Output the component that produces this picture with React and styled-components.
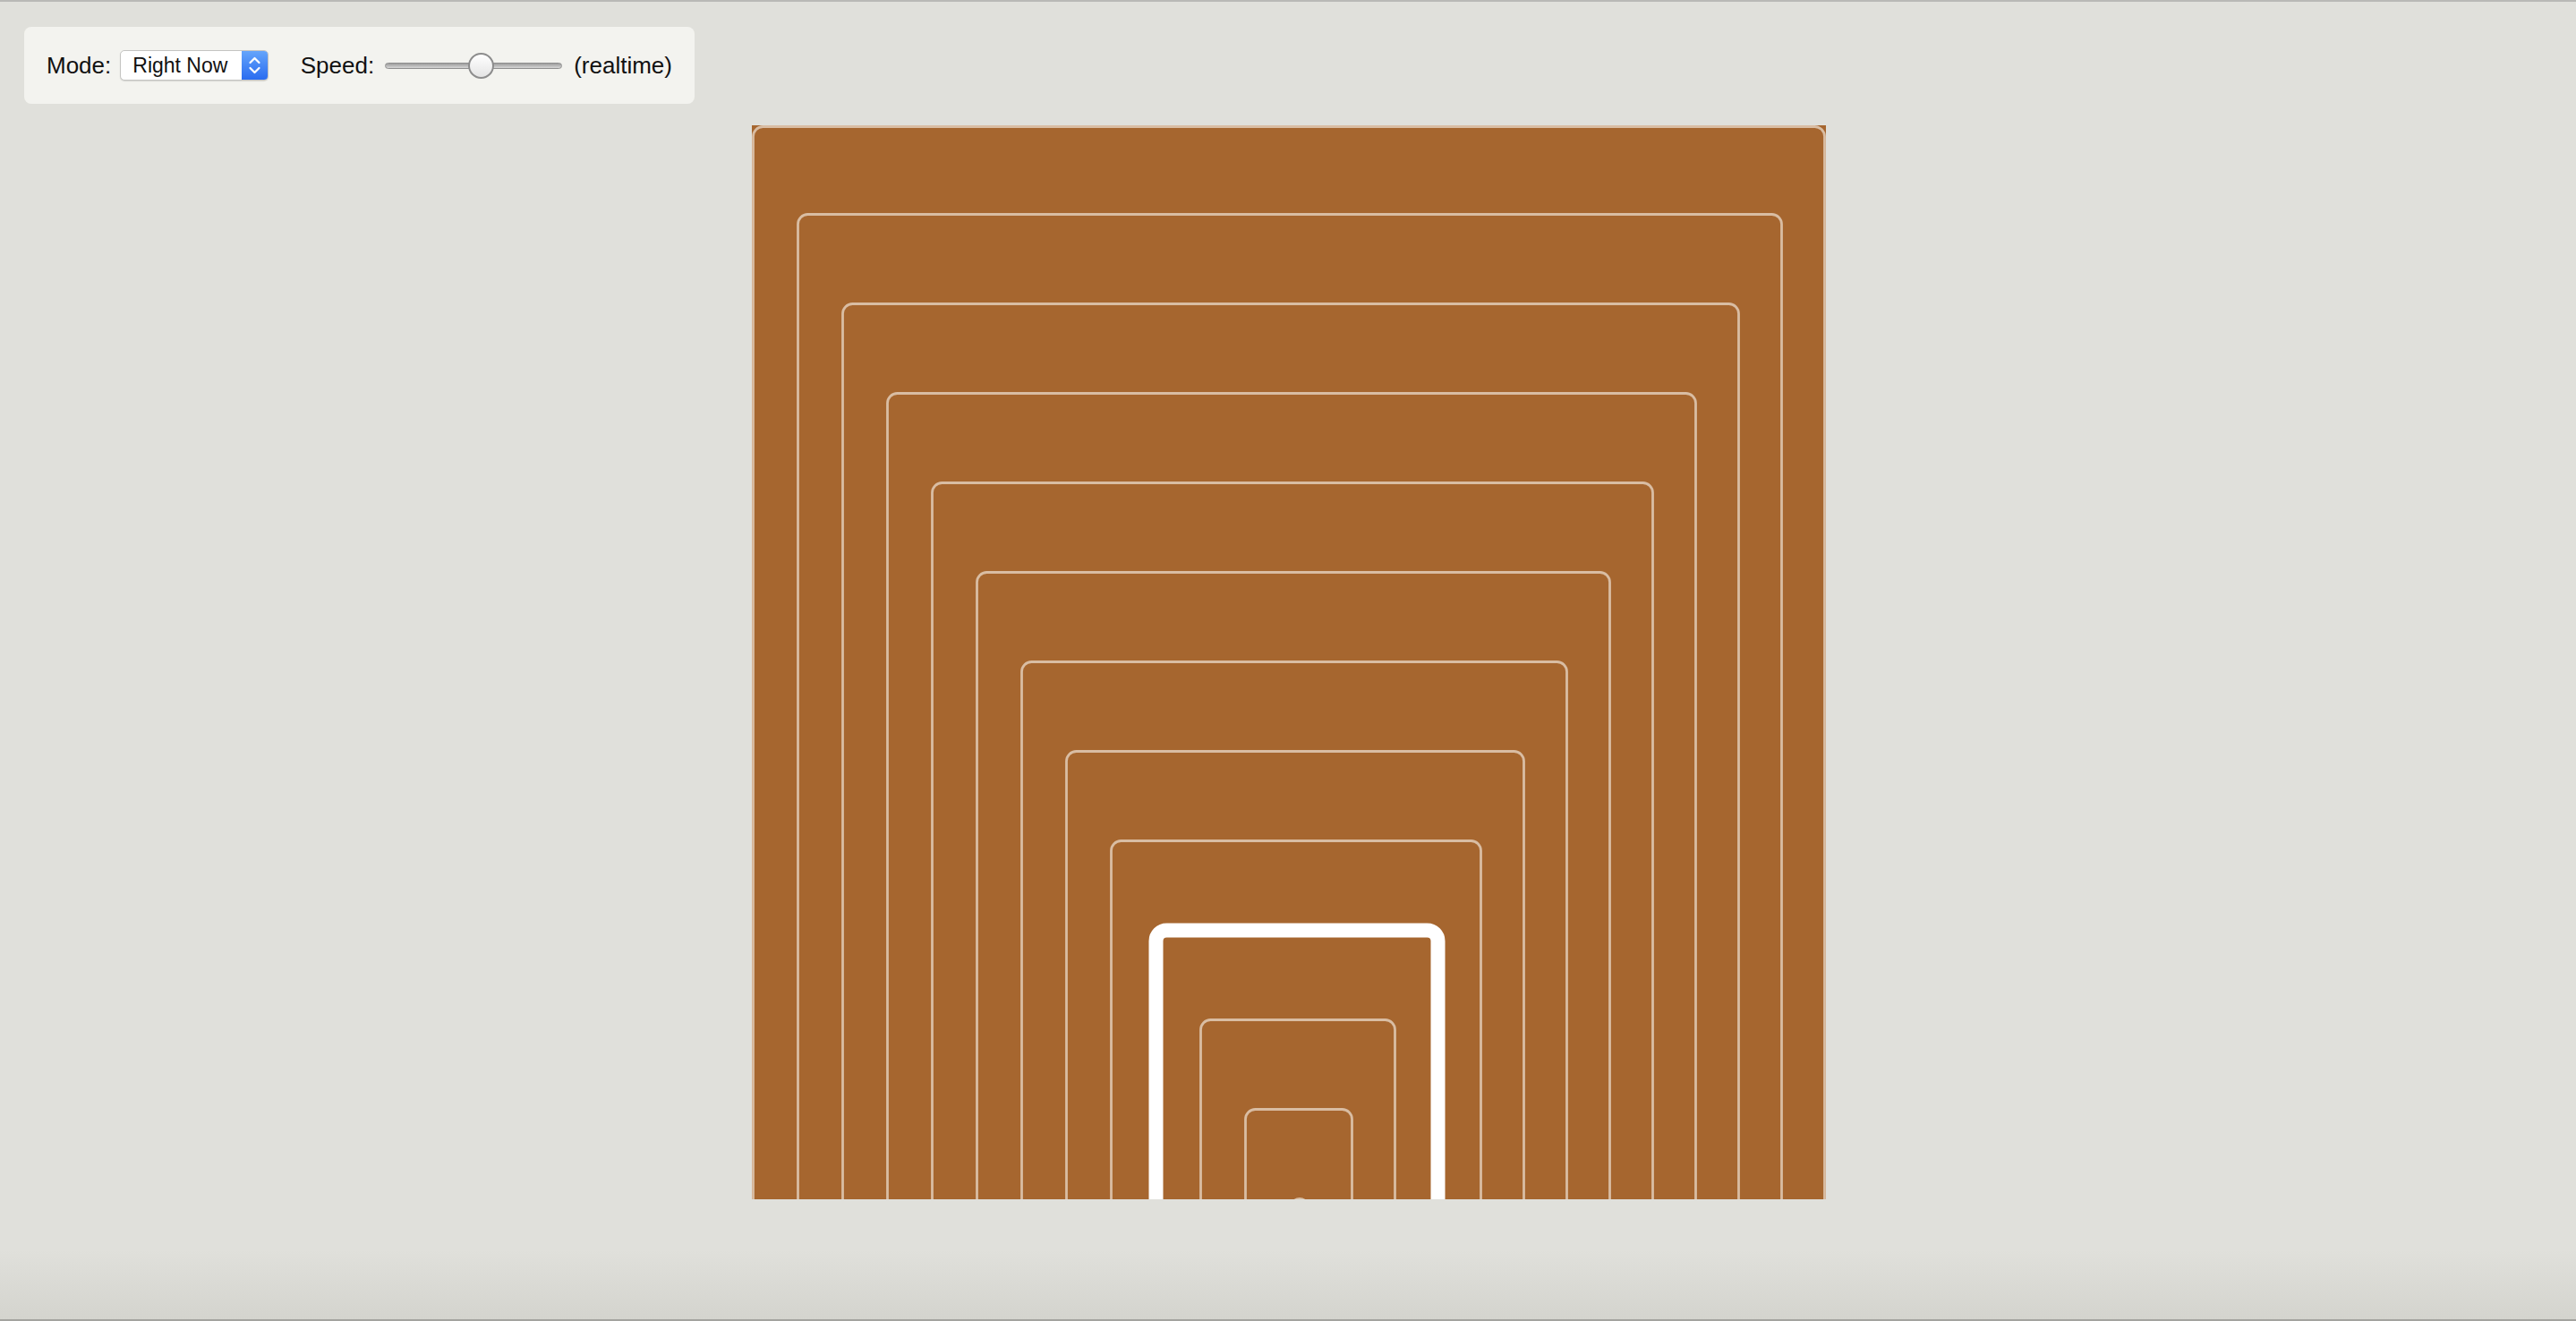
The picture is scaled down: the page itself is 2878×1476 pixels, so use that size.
import React, { useState } from "react";
import styled, { createGlobalStyle } from "styled-components";

const GlobalStyle = createGlobalStyle`
  html, body { margin: 0; padding: 0; }
  body {
    background: #e0e0db;
    font-family: "Liberation Sans", Arial, sans-serif;
  }
`;

const Page = styled.div`
  box-sizing: border-box;
  height: 100vh;
  display: flex;
  flex-direction: column;
  padding-top: 28px;
  border-top: 2px solid #b9b9b6;
  background: linear-gradient(
    to bottom,
    #e0e0db 0,
    #e0e0db calc(100% - 80px),
    #d4d4ce calc(100% - 2px),
    #a3a39f calc(100% - 2px)
  );
  overflow: hidden;
`;

const Toolbar = styled.div`
  align-self: flex-start;
  margin-left: 27px;
  box-sizing: border-box;
  width: 749px;
  height: 86px;
  padding: 0 25px;
  display: flex;
  align-items: center;
  background: #f3f3ef;
  border-radius: 8px;
  font-size: 26px;
  color: #111;
`;

const Label = styled.span`
  margin-left: ${(p) => p.$before || 0}px;
  margin-right: ${(p) => p.$after || 0}px;
  white-space: nowrap;
`;

const SelectBox = styled.div`
  box-sizing: border-box;
  width: 167px;
  height: 34px;
  display: flex;
  background: #fff;
  border: 1px solid #c4c4c2;
  border-radius: 5px;
  box-shadow: 0 1px 1px rgba(0, 0, 0, 0.12);
  overflow: hidden;
`;

const NativeSelect = styled.select`
  appearance: none;
  -webkit-appearance: none;
  flex: 1;
  min-width: 0;
  height: 100%;
  border: none;
  outline: none;
  background: transparent;
  padding: 0 0 0 13px;
  font-family: "Liberation Sans", Arial, sans-serif;
  font-size: 23px;
  color: #111;
`;

const ArrowBox = styled.div`
  width: 29px;
  height: 100%;
  flex: none;
  background: linear-gradient(to bottom, #65a5fb, #2a6cf0);
  display: flex;
  align-items: center;
  justify-content: center;
`;

const Range = styled.input`
  appearance: none;
  -webkit-appearance: none;
  width: 200px;
  height: 30px;
  margin: 0 13px 0 0;
  padding: 0;
  background: transparent;
  outline: none;

  &::-webkit-slider-runnable-track {
    height: 7px;
    border: 1px solid #8f8f8f;
    border-radius: 5px;
    background: linear-gradient(to bottom, #9d9d9d, #d6d6d6);
  }
  &::-webkit-slider-thumb {
    -webkit-appearance: none;
    appearance: none;
    box-sizing: border-box;
    width: 29px;
    height: 29px;
    margin-top: -12px;
    border-radius: 50%;
    border: 2px solid #8d8d8d;
    background: linear-gradient(to bottom, #ffffff, #e4e4e4);
  }
`;

const Board = styled.svg`
  display: block;
  align-self: center;
  margin-top: 24px;
  margin-left: 2px;
  flex: none;
`;

const BROWN = "#a6662f";
const RINGS = Array.from({ length: 13 }, (_, i) => i);

export default function App() {
  const [mode, setMode] = useState("now");
  const [speed, setSpeed] = useState(55);

  return (
    <>
      <GlobalStyle />
      <Page>
        <Toolbar>
          <Label $after={10}>Mode:</Label>
          <SelectBox>
            <NativeSelect value={mode} onChange={(e) => setMode(e.target.value)}>
              <option value="now">Right Now</option>
              <option value="day">Today</option>
            </NativeSelect>
            <ArrowBox>
              <svg width="29" height="34" viewBox="0 0 29 34">
                <path d="M9.5 14 L14.5 9 L19.5 14" fill="none" stroke="#fff" strokeWidth="2.2" strokeLinecap="round" strokeLinejoin="round" />
                <path d="M9.5 20 L14.5 25 L19.5 20" fill="none" stroke="#fff" strokeWidth="2.2" strokeLinecap="round" strokeLinejoin="round" />
              </svg>
            </ArrowBox>
          </SelectBox>
          <Label $before={36} $after={12}>Speed:</Label>
          <Range
            type="range"
            min="0"
            max="100"
            value={speed}
            onChange={(e) => setSpeed(Number(e.target.value))}
          />
          <Label>(realtime)</Label>
        </Toolbar>

        <Board width="1200" height="1200" viewBox="0 0 1200 1200">
          <rect x="0" y="0" width="1200" height="1200" fill={BROWN} />
          {RINGS.map((i) => {
            const thick = i === 9;
            const x = 50 * i + 1.5;
            const y = i === 0 ? 1.5 : 100 * i - 0.5;
            const w = 1200 - 98 * i - 3;
            return (
              <rect
                key={i}
                x={x}
                y={y}
                width={w}
                height={1300 - y}
                rx={thick ? 12 : 11}
                ry={thick ? 12 : 11}
                fill="none"
                stroke={thick ? "#ffffff" : "#d9bda3"}
                strokeWidth={thick ? 16 : 2.8}
              />
            );
          })}
        </Board>
      </Page>
    </>
  );
}
